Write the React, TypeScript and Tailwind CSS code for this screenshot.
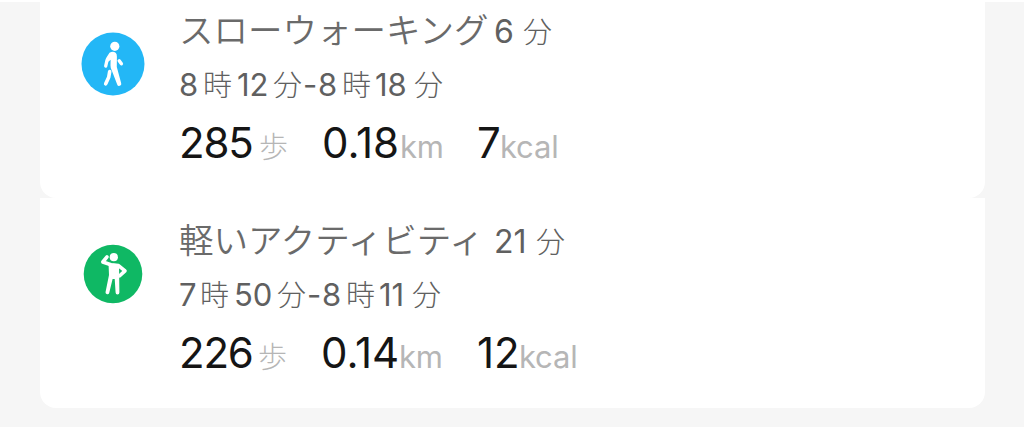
import type { ReactNode } from 'react';
import clsx from 'clsx';

type Part = {
  text: string;
  className: string; // width of the slot, plus small nudges
  kanji?: boolean;
};

type Activity = {
  id: string;
  icon: ReactNode;
  title: Part[];
  time: Part[];
  stats: { value: Part; unit: Part }[];
};

function WalkIcon() {
  return (
    <svg viewBox="0 0 64 64" className="w-16 h-16">
      <circle cx="32" cy="32" r="31.5" fill="#23b7f6" />
      <circle cx="33.8" cy="14.3" r="4.6" fill="#fff" />
      <path
        d="M28.5 20.8 Q32 18.8 34.6 20.8 Q36 22 35.9 24.5 L35.8 35 L40.2 51.3 A1.9 1.9 0 0 1 36.2 52.4 L30.9 38.8 Q29.4 36.5 29.5 33.5 L29.6 27.8 L27.4 29.8 L26.3 34.4 A1.6 1.6 0 0 1 23.1 33.8 L24.3 28.2 Q24.7 26.7 25.6 25.2 Z"
        fill="#fff"
      />
      <path d="M28.7 39.5 L27.7 45.2 L24.7 51.8" fill="none" stroke="#fff" strokeWidth="3.6" strokeLinecap="round" strokeLinejoin="round" />
      <path d="M38.2 28.8 L40.4 31.8" fill="none" stroke="#fff" strokeWidth="3.4" strokeLinecap="round" />
    </svg>
  );
}

function StandIcon() {
  return (
    <svg viewBox="0 0 64 64" className="w-16 h-16">
      <circle cx="32" cy="32" r="29.3" fill="#0fb864" />
      <circle cx="32.8" cy="15.2" r="4.1" fill="#fff" />
      <path d="M26 14.8 L21.8 20 L30 22.8 L37.5 23.6 L44 28.9 L38.7 33.8" fill="none" stroke="#fff" strokeWidth="3.6" strokeLinecap="round" strokeLinejoin="round" />
      <path d="M27.5 21.2 L38 22.2 L38.4 50.5 A1.9 1.9 0 0 1 34.6 50.5 L33.7 37 L31.6 37 L28.2 51 A1.9 1.9 0 0 1 24.5 50.3 L28 33 Z" fill="#fff" />
    </svg>
  );
}

const activities: Activity[] = [
  {
    id: 'walk',
    icon: <WalkIcon />,
    title: [
      { text: 'スローウォーキング', className: 'w-[315px] text-[34.5px] font-[350] text-[#6a6a6a]', kanji: true },
      { text: '6', className: 'w-[29px] text-[32px]' },
      { text: '分', className: 'text-[29px] font-light', kanji: true },
    ],
    time: [
      { text: '8', className: 'w-[24px] text-[31px]' },
      { text: '時', className: 'w-[34px] text-[29px] font-light', kanji: true },
      { text: '12', className: 'w-[36px] text-[31px]' },
      { text: '分', className: 'w-[30px] text-[29px] font-light', kanji: true },
      { text: '-', className: 'w-[15px] text-[31px]' },
      { text: '8', className: 'w-[24px] text-[31px]' },
      { text: '時', className: 'w-[33px] text-[29px] font-light', kanji: true },
      { text: '18', className: 'w-[39px] text-[31px]' },
      { text: '分', className: 'text-[29px] font-light', kanji: true },
    ],
    stats: [
      { value: { text: '285', className: 'w-[80px] tracking-[-1.2px]' }, unit: { text: '歩', className: 'w-[63px] text-[29px] font-light', kanji: true } },
      { value: { text: '0.18', className: 'w-[78px]' }, unit: { text: 'km', className: 'w-[77px] text-[31px] tracking-[-0.3px]' } },
      { value: { text: '7', className: 'w-[23px]' }, unit: { text: 'kcal', className: 'text-[31px] tracking-[-0.2px]' } },
    ],
  },
  {
    id: 'light',
    icon: <StandIcon />,
    title: [
      { text: '軽いアクティビティ', className: 'w-[315px] text-[34.5px] font-[350] text-[#6a6a6a]', kanji: true },
      { text: '21', className: 'w-[42px] text-[32px]' },
      { text: '分', className: 'text-[29px] font-light', kanji: true },
    ],
    time: [
      { text: '7', className: 'w-[21px] text-[31px]' },
      { text: '時', className: 'w-[34px] text-[29px] font-light', kanji: true },
      { text: '50', className: 'w-[43px] text-[31px]' },
      { text: '分', className: 'w-[30px] text-[29px] font-light', kanji: true },
      { text: '-', className: 'w-[15px] text-[31px]' },
      { text: '8', className: 'w-[24px] text-[31px]' },
      { text: '時', className: 'w-[33px] text-[29px] font-light', kanji: true },
      { text: '11', className: 'w-[33px] text-[31px]' },
      { text: '分', className: 'text-[29px] font-light', kanji: true },
    ],
    stats: [
      { value: { text: '226', className: 'w-[79px] tracking-[-1.2px]' }, unit: { text: '歩', className: 'w-[63px] text-[29px] font-light', kanji: true } },
      { value: { text: '0.14', className: 'w-[78px]' }, unit: { text: 'km', className: 'w-[78px] text-[31px] tracking-[-0.3px]' } },
      { value: { text: '12', className: 'w-[42px]' }, unit: { text: 'kcal', className: 'text-[31px] tracking-[-0.2px]' } },
    ],
  },
];

function Text({ text, className, kanji }: Part) {
  return (
    <span
      className={clsx(
        'shrink-0',
        kanji ? "font-['Noto_Sans_CJK_JP',sans-serif]" : "font-['Inter',sans-serif]",
        className
      )}
    >
      {text}
    </span>
  );
}

function ActivityCard({ activity }: { activity: Activity }) {
  return (
    <section className="flex h-[210px] shrink-0 rounded-b-2xl bg-white pl-[41px] whitespace-nowrap">
      <div className="mt-[44px] mr-[34px] h-16 w-16 shrink-0">{activity.icon}</div>
      <div className="pt-5">
        <h2 className="flex h-[55px] items-baseline leading-10 text-[#606060]">
          {activity.title.map((p, i) => <Text key={i} {...p} />)}
        </h2>
        <p className="flex h-[57px] items-baseline leading-10 text-[#606060]">
          {activity.time.map((p, i) => <Text key={i} {...p} />)}
        </p>
        <div className="flex items-baseline leading-[44px]">
          {activity.stats.map(({ value, unit }) => (
            <div key={unit.text} className="flex items-baseline">
              <span className="text-[42px] text-[#151515]"><Text {...value} className={clsx('inline-block', value.className)} /></span>
              <span className="text-[#b6b6b6]"><Text {...unit} className={clsx('inline-block', unit.className)} /></span>
            </div>
          ))}
        </div>
      </div>
    </section>
  );
}

export default function App() {
  return (
    <main className="h-[427px] overflow-hidden border-t-2 border-white bg-[#f6f6f6] pr-[39px] pl-[40px]">
      {/* the list is scrolled, the first card is cut off at the top */}
      <div className="-mt-[14px] flex flex-col">
        {activities.map((a) => <ActivityCard key={a.id} activity={a} />)}
      </div>
    </main>
  );
}
